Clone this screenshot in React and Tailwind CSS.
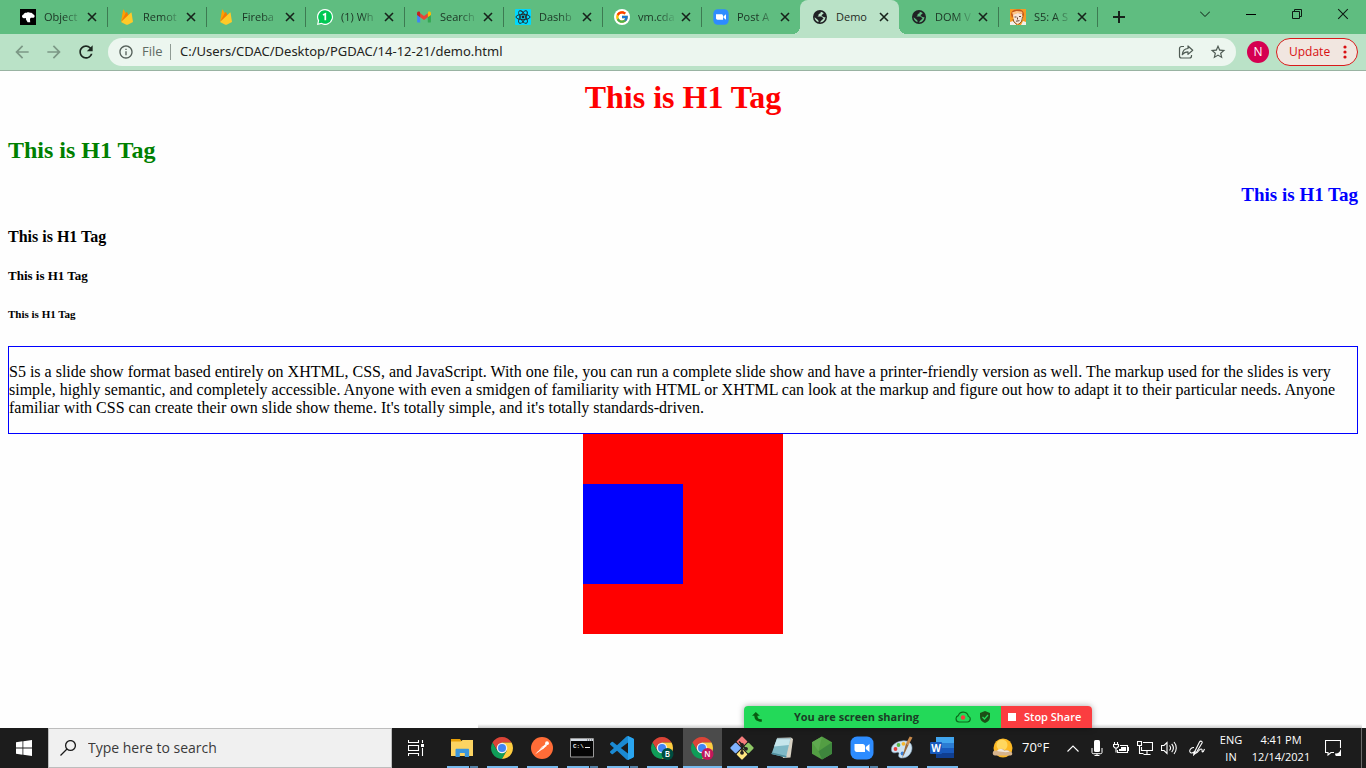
import React from "react";
import { FcGoogle } from "react-icons/fc";
import { MdArrowBack, MdArrowForward, MdRefresh, MdInfoOutline, MdStarBorder } from "react-icons/md";

const SEGOE = "font-['Open_Sans','Noto_Sans',sans-serif]";

/* ---------- favicons ---------- */

const ObjectIcon = () => (
  <svg viewBox="0 0 16 16" className="size-4">
    <path d="M0 0h16v16H0z" fill="#000" />
    <path d="M2 7.500c0-1.300.900-1.800 1.500-2C3.900 4 5.500 3.400 6.700 3.700c1-.700 2.700-.600 3.400 0 1.500-.100 2.600.600 2.900 1.500 1 .300 1.600 1 1.600 2s-.900 1.600-1.800 1.600H11c-.700.500-1 .900-1 1.800l.200 2.700H7.600L6 10.500l-.200-1.400C4.500 9.400 2 9.300 2 7.500z" fill="#fff" />
  </svg>
);

const FirebaseIcon = () => (
  <svg viewBox="0 0 16 16" className="size-4">
    <path d="M2 13 4.100.800c.100-.500.500-.500.700-.100L7 4.700z" fill="#ffa000" />
    <path d="M2 13 7.300 3.200c.200-.400.500-.400.700 0L10 7z" fill="#f57c00" />
    <path d="m2 13 9.800-9.300c.300-.300.700-.200.800.200L14 13l-5.300 2.700c-.500.200-.900.200-1.400 0z" fill="#ffca28" />
  </svg>
);

const WhatsAppIcon = () => (
  <svg viewBox="0 0 16 16" className="size-4">
    <path d="M8 0a8 8 0 1 1-3.700 15.100L0 16l.900-4.300A8 8 0 0 1 8 0z" fill="#fff" />
    <path d="M8 1.200a6.800 6.800 0 1 1-3.500 12.600l-3 .700.700-3A6.800 6.800 0 0 1 8 1.200z" fill="#00c853" />
    <path d="M6 6 8.300 4.800v6.500" fill="none" stroke="#fff" strokeWidth="1.700" />
  </svg>
);

const GmailIcon = () => (
  <svg viewBox="0 0 16 16" className="size-4">
    <path d="M1.100 3.300v9.600c0 .400.300.700.700.700h2.400V7.500z" fill="#4285f4" />
    <path d="M14.900 3.300v9.600c0 .400-.300.700-.700.700h-2.400V7.500z" fill="#34a853" />
    <path d="M11.800 4.300v4l3.200-2.400V4.200c0-1.500-1.700-2.200-2.800-1.400z" fill="#fbbc04" />
    <path d="M4.200 8.300v-4L8 7.100l3.800-2.800v4L8 11.100z" fill="#ea4335" />
    <path d="M1 4.200v1.700l3.200 2.400v-4l-.400-1.500C2.700 2 1 2.700 1 4.200z" fill="#c5221f" />
  </svg>
);

const ReactIcon = () => (
  <svg viewBox="0 0 16 16" className="size-4">
    <rect width="16" height="16" rx="1" fill="#00d8ff" />
    <g fill="none" stroke="#222" strokeWidth="0.900">
      <ellipse cx="8" cy="8" rx="7" ry="2.700" />
      <ellipse cx="8" cy="8" rx="7" ry="2.700" transform="rotate(60 8 8)" />
      <ellipse cx="8" cy="8" rx="7" ry="2.700" transform="rotate(120 8 8)" />
    </g>
    <circle cx="8" cy="8" r="1.400" fill="#222" />
  </svg>
);

const GoogleIcon = () => (
  <span className="flex size-4 items-center justify-center rounded-full bg-white">
    <FcGoogle className="size-[14px]" />
  </span>
);

const ZoomIcon = ({ className = "size-4" }) => (
  <svg viewBox="0 0 24 24" className={className}>
    <rect x="0.500" y="0.500" width="23" height="23" rx="6.500" fill="#2d8cff" />
    <path d="M4.500 8h8.300c1.200 0 2.200 1 2.200 2.200V16H6.700c-1.200 0-2.200-1-2.200-2.200zM15.800 10.900 19.500 8v8l-3.700-2.900z" fill="#fff" />
  </svg>
);

const GlobeIcon = () => (
  <svg viewBox="0 0 16 16" className="size-4" fillRule="evenodd">
    <path
      fill="#202124"
      d="M8 1a7 7 0 1 1 0 14A7 7 0 0 1 8 1zM8.800 2.700C8.500 3.500 8.900 4 8 4.400 7 4.700 6.400 5 6.600 6c.300.800-.800.900-1 1.500h3.600c1 0 1 1 1.700 1.300.900.200.500 1.400-.300 1.700-.900.300-1 1-1.600 1.500-.600.500-.800 1-.9 1.400 3.200-.100 5.300-2.600 5.300-5.400-1.200.500-1.900-.500-2.800-.600C9.700 7.200 9.300 6.500 10 5.700c.700-.500 1.800-.700 1.500-1.600-.8-.8-1.700-1.200-2.700-1.400zM2.600 8.200c.100 2.400 1.800 4.300 3.900 4.900.200-.900-.100-1.500-.6-2C5 10.200 4 9 2.600 8.200z"
    />
  </svg>
);

const PortraitIcon = () => (
  <svg viewBox="0 0 16 16" className="size-4">
    <path d="M0 0h16v16H0z" fill="#f59a23" />
    <path d="M1 5C2 1 5 .500 8 .500c4 0 6 2 6 5.500l-1 3-1-4-8 1-2 3z" fill="#c4571c" />
    <path d="M3 5.500 7 4l5 .500.500 5.500-2.500 4-3 1-3-2.500z" fill="#f8e6da" />
    <path d="M2 3.500 6.500 2l5 .500 1.500 2-5-.500-5 2z" fill="#ffc68a" />
    <path d="M4.500 8h2M9 7.500h2M7.500 8.500v2M6 12.200l3.500-.500" stroke="#503024" strokeWidth="0.900" fill="none" />
    <path d="M0 16v-3l3-1 3.500 4zM11 16l2-4 3 1v3z" fill="#f4f0ea" />
    <path d="m3 10 1 3 3 2.500M12.500 8l-1 4.500-3 3" stroke="#5d3b25" strokeWidth="0.700" fill="none" />
  </svg>
);

/* ---------- browser chrome ---------- */

const tabs = [
  { title: "Object", Icon: ObjectIcon },
  { title: "Remot", Icon: FirebaseIcon },
  { title: "Fireba", Icon: FirebaseIcon },
  { title: "(1) Wh", Icon: WhatsAppIcon },
  { title: "Search", Icon: GmailIcon },
  { title: "Dashb", Icon: ReactIcon },
  { title: "vm.cda", Icon: GoogleIcon },
  { title: "Post A", Icon: ZoomIcon },
  { title: "Demo", Icon: GlobeIcon, active: true },
  { title: "DOM V", Icon: GlobeIcon },
  { title: "S5: A S", Icon: PortraitIcon },
];

const Cross = ({ className, width = 1.6 }) => (
  <svg viewBox="0 0 10 10" className={className} fill="none" stroke="currentColor" strokeWidth={width}>
    <path d="m1 1 8 8M9 1 1 9" />
  </svg>
);

function Tab({ title, Icon, active, divided }) {
  return (
    <div
      className={
        "relative flex h-[34px] w-[99px] shrink-0 items-center pl-3 " +
        (active ? "rounded-t-lg bg-[#bae2c7]" : "")
      }
    >
      {active && (
        <>
          <span className="absolute bottom-0 -left-2 size-2 bg-[radial-gradient(circle_at_0_0,transparent_8px,#bae2c7_8px)]" />
          <span className="absolute bottom-0 -right-2 size-2 bg-[radial-gradient(circle_at_100%_0,transparent_8px,#bae2c7_8px)]" />
        </>
      )}
      <button className="flex items-center gap-2" aria-label={title}>
        <Icon />
        <span
          className={
            "w-9 text-left text-[11px] whitespace-nowrap " +
            (active
              ? "text-[#1f2a23]"
              : "text-[#1b3323] [mask-image:linear-gradient(to_right,#000_55%,rgba(0,0,0,0.15))]")
          }
        >
          {title}
        </span>
      </button>
      <button className="ml-1 flex size-4 items-center justify-center text-[#17231b]" aria-label={"Close " + title}>
        <Cross className="size-[10px]" />
      </button>
      {divided && <span className="absolute top-[7px] -right-px h-5 w-px bg-[#3d7a52]" />}
    </div>
  );
}

function TabStrip() {
  return (
    <div className="flex h-[34px] bg-[#5fbd80] pl-2">
      {tabs.map((t, i) => (
        <Tab key={i} {...t} divided={!t.active && !(tabs[i + 1] && tabs[i + 1].active)} />
      ))}
      <button className="ml-2 flex w-7 items-center justify-center text-[#17231b]" aria-label="New tab">
        <svg viewBox="0 0 12 12" className="size-3" stroke="currentColor" strokeWidth="2">
          <path d="M6 0v12M0 6h12" />
        </svg>
      </button>
      <div className="ml-auto flex h-7 text-[#0d1a12]">
        <button className="flex w-[46px] items-center justify-center" aria-label="Search tabs">
          <svg viewBox="0 0 10 6" className="h-[6px] w-[10px]" fill="none" stroke="currentColor">
            <path d="m0 .500 5 5 5-5" />
          </svg>
        </button>
        <button className="flex w-[46px] items-center justify-center" aria-label="Minimize">
          <span className="h-px w-[10px] bg-black" />
        </button>
        <button className="flex w-[46px] items-center justify-center" aria-label="Restore">
          <svg viewBox="0 0 10 10" className="size-[10px]" fill="none" stroke="currentColor">
            <path d="M.500 2.500h7v7h-7zM2.500 2.500v-2h7v7h-2" />
          </svg>
        </button>
        <button className="flex w-[46px] items-center justify-center" aria-label="Close">
          <Cross className="size-3" width={0.9} />
        </button>
      </div>
    </div>
  );
}

function Toolbar() {
  return (
    <div className="flex h-[37px] items-center border-b border-[#99b3a2] bg-[#bae2c7] pr-2 pl-[6px]">
      <button className="flex w-8 justify-center text-[#7c9886]" aria-label="Back">
        <MdArrowBack className="size-5" />
      </button>
      <button className="flex w-8 justify-center text-[#7c9886]" aria-label="Forward">
        <MdArrowForward className="size-5" />
      </button>
      <button className="flex w-8 justify-center text-[#1c2720]" aria-label="Reload">
        <MdRefresh className="size-5" />
      </button>
      <div className="ml-[6px] flex h-7 min-w-0 flex-1 items-center rounded-full bg-[#ecf6ef] pr-[10px] pl-[10px]">
        <MdInfoOutline className="size-4 text-[#55605a]" />
        <span className="ml-2 w-[28px] text-[13px] text-[#5f6b64]">File</span>
        <span className="h-4 w-px bg-[#8f9b94]" />
        <input
          aria-label="Address"
          className="ml-[9px] min-w-0 flex-1 bg-transparent font-['Noto_Sans',sans-serif] text-[13px] text-[#1f2421] outline-none"
          defaultValue="C:/Users/CDAC/Desktop/PGDAC/14-12-21/demo.html"
        />
        <button aria-label="Share" className="mr-4 text-[#4f5b54]">
          <svg viewBox="0 0 16 16" className="size-4" fill="none" stroke="currentColor" strokeWidth="1.200">
            <path d="M6 2.500H3.500a2 2 0 0 0-2 2v7.500a2 2 0 0 0 2 2h8a2 2 0 0 0 2-2V11" />
            <path d="M10 2v2.500C6.300 4.700 4.600 7 4.300 10.700 5.700 8.700 7.300 7.900 10 7.900v2.500l4.700-4.200z" strokeLinejoin="round" />
          </svg>
        </button>
        <button aria-label="Bookmark" className="text-[#4f5b54]">
          <MdStarBorder className="size-4 scale-110" />
        </button>
      </div>
      <button className="ml-[11px] flex size-[22px] items-center justify-center rounded-full bg-[#d50051] text-xs text-white">
        N
      </button>
      <button className="ml-[7px] flex h-7 w-[82px] items-center justify-between rounded-full border border-[#d91a1a] bg-[#f1e6e0] pr-[10px] pl-3 text-xs text-[#d80f12]">
        Update
        <svg viewBox="0 0 4 14" className="h-[14px] w-1" fill="currentColor">
          <circle cx="2" cy="2" r="1.600" />
          <circle cx="2" cy="7" r="1.600" />
          <circle cx="2" cy="12" r="1.600" />
        </svg>
      </button>
    </div>
  );
}

/* ---------- page ---------- */

function SharingBar() {
  return (
    <div className={"absolute bottom-0 left-[744px] flex h-[22px] w-[348px] overflow-hidden rounded-t shadow-[0_0_6px_rgba(0,0,0,0.35)] " + SEGOE}>
      <div className="flex flex-1 items-center bg-[#23d959] pr-[10px] pl-2 text-[#0a4a12]">
        <svg viewBox="0 0 10 10" className="size-[10px]" fill="#075c10">
          <path d="M3.800 0 0 3.800h2.300C2.400 7.600 4.500 9.800 9.800 9.800V7.300C6.700 7.600 5.500 6.400 5.400 3.800h2.400z" />
        </svg>
        <span className="flex-1 pr-1 text-center text-[11px] font-bold text-[#1b3d26]">You are screen sharing</span>
        <svg viewBox="0 0 16 12" className="mr-2 h-3 w-4">
          <path d="M4 11h8.500a3 3 0 0 0 .800-5.800A5.200 5.200 0 0 0 3.300 4.600 3.300 3.300 0 0 0 4 11z" fill="none" stroke="#0b6b1b" strokeWidth="1.200" />
          <circle cx="8" cy="6.500" r="2.200" fill="#f93b3d" />
        </svg>
        <svg viewBox="0 0 12 12" className="size-3">
          <path d="M6 0 11 2v4c0 3-2 5-5 6-3-1-5-3-5-6V2z" fill="#1c4f16" />
          <path d="m3.500 6 2 2 3.500-4" fill="none" stroke="#23d959" strokeWidth="1.300" />
        </svg>
      </div>
      <button className="flex w-[91px] items-center gap-2 bg-[#fb3d40] pl-[7px] text-[11px] font-semibold whitespace-nowrap text-white">
        <span className="size-2 bg-white" />
        Stop Share
      </button>
    </div>
  );
}

function Page() {
  return (
    <main className="relative flex-1 bg-[#fefefe] p-2 font-['Liberation_Serif',serif] text-black">
      <h1 className="text-center text-[32px] leading-9 font-bold text-[#ff0000]">This is H1 Tag</h1>
      <h2 className="mt-[22px] text-2xl leading-[27px] font-bold text-[#008000]">This is H1 Tag</h2>
      <h3 className="mt-5 text-right text-[19px] leading-[22px] font-bold text-[#0000ff]">This is H1 Tag</h3>
      <h4 className="mt-[22px] text-base leading-[18px] font-bold">This is H1 Tag</h4>
      <h5 className="mt-[22px] text-[13px] leading-[15px] font-bold">This is H1 Tag</h5>
      <h6 className="mt-[25px] text-[11px] leading-[13px] font-bold">This is H1 Tag</h6>
      <div className="mt-[25px] border border-[#0000ff] py-4">
        <p className="text-base leading-[18px]">
          S5 is a slide show format based entirely on XHTML, CSS, and JavaScript. With one file, you can run a
          complete slide show and have a printer-friendly version as well. The markup used for the slides is very
          simple, highly semantic, and completely accessible. Anyone with even a smidgen of familiarity with HTML or
          XHTML can look at the markup and figure out how to adapt it to their particular needs. Anyone familiar with
          CSS can create their own slide show theme. It's totally simple, and it's totally standards-driven.
        </p>
      </div>
      <div className="mx-auto flex size-[200px] items-center bg-[#ff0000]">
        <div className="size-[100px] bg-[#0000ff]" />
      </div>
      <div className="absolute right-1 bottom-0 left-[478px] h-1 bg-linear-to-b from-transparent to-black/20" />
      <SharingBar />
    </main>
  );
}

/* ---------- taskbar icons ---------- */

const FolderIcon = () => (
  <svg viewBox="0 0 24 24" className="size-6">
    <path d="M1 3h9l1.500 2H23v15H1z" fill="#e8a008" />
    <path d="M1 5.500h10L12.500 4H23v16H1z" fill="#fcd462" />
    <path d="M5.500 21v-7c0-.800.500-1.300 1.300-1.300h11c.800 0 1.300.500 1.300 1.300v7h-4.300v-4H9.800v4z" fill="#3a96dd" />
  </svg>
);

const ChromeIcon = ({ badge, color }) => (
  <svg viewBox="0 0 48 48" className="size-6">
    <path d="M4.950 13A22 22 0 0 1 43.050 13H24v11l-9.530 5.500z" fill="#db4437" />
    <path d="m4.950 13 9.520 16.500L24 24l9.530 5.500L24 46A22 22 0 0 1 4.950 13z" fill="#0f9d58" />
    <path d="M43.050 13H24v11l9.530 5.500L24 46a22 22 0 0 0 19.050-33z" fill="#ffcd40" />
    <circle cx="24" cy="24" r="10.500" fill="#f1f1f1" />
    <circle cx="24" cy="24" r="8" fill="#4285f4" />
    {badge && (
      <>
        <circle cx="35" cy="36" r="12" fill={color} />
        <text x="35" y="42" textAnchor="middle" fontSize="16" fontWeight="600" fill="#fff">
          {badge}
        </text>
      </>
    )}
  </svg>
);

const PostmanIcon = () => (
  <svg viewBox="0 0 24 24" className="size-6">
    <circle cx="12" cy="12" r="11" fill="#ff6c37" />
    <path d="M5 18.500 12.500 10l2 1.800z" fill="#fff" />
    <path d="m10 13 5.500-5 1.500 1.700-4.500 3.600z" fill="#fff" />
    <circle cx="17" cy="7.200" r="1.900" fill="#fff" />
    <path d="m8 15 5-4.500" stroke="#ff6c37" strokeWidth="0.600" />
  </svg>
);

const CmdIcon = () => (
  <svg viewBox="0 0 24 24" className="size-6">
    <path d="M.500 2.500h23v18.500H.500z" fill="#050505" stroke="#9a9a9a" />
    <path d="M1 3h22v2H1z" fill="#d5dce4" />
    <path d="M17 4h1M19 4h1M21 4h1" stroke="#555" />
    <text x="3" y="12" fontSize="6" fontWeight="bold" fill="#eee" className="font-['Liberation_Mono',monospace]">
      C:\
    </text>
    <path d="M15 11.500h5" stroke="#eee" />
  </svg>
);

const CodeIcon = () => (
  <svg viewBox="0 0 24 24" className="size-6">
    <path
      fill="#1b8ad3"
      d="M23.150 2.587L18.210.210a1.494 1.494 0 0 0-1.705.290l-9.460 8.630-4.120-3.128a.999.999 0 0 0-1.276.057L.327 7.261A1 1 0 0 0 .326 8.740L3.899 12 .326 15.260a1 1 0 0 0 .001 1.479L1.650 17.940a.999.999 0 0 0 1.276.057l4.120-3.128 9.460 8.630a1.492 1.492 0 0 0 1.704.290l4.942-2.377A1.500 1.500 0 0 0 24 20.060V3.939a1.500 1.500 0 0 0-.850-1.352zm-5.146 14.861L10.826 12l7.178-5.448v10.896z"
    />
    <path d="m18 0 5.200 2.600c.500.300.800.800.800 1.400v16c0 .600-.300 1.100-.800 1.400L18 24z" fill="#2aa5f0" />
  </svg>
);

const GitIcon = () => (
  <svg viewBox="0 0 24 24" className="size-6">
    <g transform="rotate(45 12 12)">
      <rect x="3.500" y="3.500" width="8" height="8" rx="1" fill="#f47c7c" />
      <rect x="12.500" y="3.500" width="8" height="8" rx="1" fill="#8fc866" />
      <rect x="3.500" y="12.500" width="8" height="8" rx="1" fill="#80b3ff" />
      <rect x="12.500" y="12.500" width="8" height="8" rx="1" fill="#ffe680" />
    </g>
    <path d="M9 5.500 12 8.500v9M12 9l4 4" stroke="#231f20" strokeWidth="1.600" fill="none" />
    <circle cx="12" cy="8.800" r="1.900" fill="#231f20" />
    <circle cx="12" cy="16.800" r="1.900" fill="#231f20" />
    <circle cx="16" cy="12.800" r="1.900" fill="#231f20" />
  </svg>
);

const NotepadIcon = () => (
  <svg viewBox="0 0 24 24" className="size-6">
    <path d="m7 2 14-.500 2 1.500-2.500 18.500-7.500.500z" fill="#d8d2c4" />
    <path d="M7 2.500 20.500 2 16 21.500 1.500 18z" fill="#7fb9c6" />
    <path d="M7 2.500 20.500 2l-1.600 7L4 10.500z" fill="#c6e6ec" />
    <path d="M7.500 2.500h13" stroke="#8b9aa0" strokeDasharray="1 1" strokeWidth="1.500" />
    <path d="m16 21.500-14.500-3.500.500-1.500 14.500 3.500z" fill="#4f8d9c" />
  </svg>
);

const NodeIcon = () => (
  <svg viewBox="0 0 24 24" className="size-6">
    <path d="m12 .500 10 5.700v11.600l-10 5.700-10-5.700V6.200z" fill="#539e43" />
    <path d="M12 .500 2 6.200l6.500 9z" fill="#5fa84f" />
    <path d="m22 6.200-13.500 9 3.500 8.300 10-5.700z" fill="#3e863d" />
  </svg>
);

const PaintIcon = () => (
  <svg viewBox="0 0 24 24" className="size-6">
    <path d="M12 5c6-1 10 2 10 7s-4 10-10 10c-3 0-4-2-3-4 .500-1.200-1-2-2.500-1.500C3 17.500 1 16 1.500 12.500 2 8.500 7 5.500 12 5z" fill="#cfe3f2" stroke="#8aa9c2" strokeWidth="0.600" />
    <circle cx="5.500" cy="13" r="1.900" fill="#e2403a" />
    <circle cx="8.500" cy="9" r="1.900" fill="#58b947" />
    <circle cx="13.500" cy="7.800" r="1.900" fill="#f6b62c" />
    <circle cx="12.500" cy="17.500" r="1.900" fill="#3b7fd4" />
    <path d="m22.500 1.500-2.800-1-3.700 7 2.500 1.500z" fill="#c98a4b" />
    <path d="m16 7.500 2.500 1.500-3 6.500-3.500 7z" fill="#9b6a3c" />
  </svg>
);

const WordIcon = () => (
  <svg viewBox="0 0 24 24" className="size-6">
    <path d="M6 1h18v6H6z" fill="#41a5ee" />
    <path d="M6 7h18v5H6z" fill="#2b7cd3" />
    <path d="M6 12h18v5H6z" fill="#185abd" />
    <path d="M6 17h18v5H6z" fill="#103f91" />
    <rect y="6" width="12" height="12" rx="1" fill="#185abd" />
    <text x="6" y="15.500" textAnchor="middle" fontSize="10" fontWeight="bold" fill="#fff">
      W
    </text>
  </svg>
);

const TaskZoomIcon = () => <ZoomIcon className="size-6" />;
const ChromeB = () => <ChromeIcon badge="B" color="#004d40" />;
const ChromeN = () => <ChromeIcon badge="N" color="#c2185b" />;

const apps = [
  { name: "File Explorer", Icon: FolderIcon, stacked: true },
  { name: "Chrome", Icon: ChromeIcon },
  { name: "Postman", Icon: PostmanIcon },
  { name: "Command Prompt", Icon: CmdIcon, stacked: true },
  { name: "Visual Studio Code", Icon: CodeIcon, stacked: true },
  { name: "Chrome profile B", Icon: ChromeB },
  { name: "Chrome profile N", Icon: ChromeN, active: true },
  { name: "Git", Icon: GitIcon },
  { name: "Notepad", Icon: NotepadIcon },
  { name: "Node", Icon: NodeIcon },
  { name: "Zoom", Icon: TaskZoomIcon, stacked: true },
  { name: "Paint", Icon: PaintIcon },
  { name: "Word", Icon: WordIcon },
];

function AppButton({ name, Icon, stacked, active }) {
  return (
    <button
      aria-label={name}
      className={"flex h-10 w-[39px] shrink-0 flex-col items-center " + (active ? "bg-[#4b4b4b]" : "")}
    >
      <span className="flex h-[38px] items-center pt-[2px] pr-px">
        <Icon />
      </span>
      <span className={"flex h-[2px] bg-[#76b9ed] " + (active ? "w-full" : "w-[31px]")}>
        {stacked && <span className="ml-auto w-[9px] border-l border-[#1d1d1d] bg-[#5583a8]" />}
      </span>
    </button>
  );
}

const TrayButton = ({ label, children, className = "w-6" }) => (
  <button aria-label={label} className={"flex h-10 shrink-0 items-center justify-center text-white " + className}>
    {children}
  </button>
);

const line = { fill: "none", stroke: "currentColor", strokeWidth: 1.1 };

function Tray() {
  return (
    <div className="ml-auto flex shrink-0 items-center">
      <button className="flex h-10 w-[69px] items-center gap-2 text-[13px] text-white">
        <svg viewBox="0 0 22 20" className="h-5 w-[22px] shrink-0">
          <circle cx="11" cy="10" r="9.500" fill="#fdb924" />
          <circle cx="10" cy="7" r="5.500" fill="#ffd75e" />
          <path d="M3 17.500a2.500 2.500 0 0 1 .500-5c1.500 0 2 .300 2.500.500 1-2.500 5-3 7-.500 3-.800 4 0 4.500 1 3-.200 4 3.700 1 4z" fill="#d7b48d" />
          <path d="M5 13c1-2.500 5-3 7.500 0 2-.700 4-.500 5 .700-4 1-7 .300-12.500-.700z" fill="#f0e6da" />
        </svg>
        70°F
      </button>
      <TrayButton label="Show hidden icons">
        <svg viewBox="0 0 12 7" className="h-[7px] w-3" {...line}>
          <path d="m.500 6.500 5.500-5.500 5.500 5.500" />
        </svg>
      </TrayButton>
      <TrayButton label="Microphone">
        <svg viewBox="0 0 12 16" className="h-4 w-3" fill="none" stroke="currentColor">
          <rect x="3" y="0" width="6" height="12" rx="1.500" fill="currentColor" stroke="none" />
          <path d="M1 8v4.500c0 .800.500 1.200 1.200 1.200h7.600c.700 0 1.200-.400 1.200-1.200V8M6 13.500v2M3.500 15.500h5" />
        </svg>
      </TrayButton>
      <TrayButton label="Battery">
        <svg viewBox="0 0 16 12" className="h-3 w-4" {...line}>
          <path d="M7 3.500h7.500v7H4.500V8M14.500 5.500h1v3h-1" />
          <path d="M8 5h5v4H6V7h2z" fill="currentColor" stroke="none" />
          <path d="M1.500 0v2M4.500 0v2M.500 2.500h5v2l-1.500 1.500H2L.500 4.500zM3 6v4.500" />
        </svg>
      </TrayButton>
      <TrayButton label="Network">
        <svg viewBox="0 0 16 14" className="h-[14px] w-4" {...line}>
          <path d="M6 1.500h9.500v8H4.500V6M10 9.500v3.500M6.500 13.500h7" />
          <path d="M.500.500h4v4h-4zM2.500 4.500v8h4" />
        </svg>
      </TrayButton>
      <TrayButton label="Volume">
        <svg viewBox="0 0 16 14" className="h-[14px] w-4" {...line}>
          <path d="M.500 4.500H3l3-3v11l-3-3H.500zM8.500 4.500c1.300 1.500 1.300 3.500 0 5M10.700 2.800c2.200 2.700 2.200 5.700 0 8.400M13 1c3 3.500 3 8.500 0 12" />
        </svg>
      </TrayButton>
      <TrayButton label="Windows Ink" className="w-8">
        <svg viewBox="0 0 16 16" className="size-4" {...line}>
          <path d="M5 13 10.500 2c1-1.700 3.300-.700 2.500 1L7.300 12.500zM5 13l-.300 1.800L7.300 12.500" />
          <path d="M5 7.500c-2.500 0-5 2-4 4.500 1 2 4 .500 5.500-1M7 13c2.500-.500 3-4 5-4s.500 3 1.500 3 1.500-1.500 2-3" />
        </svg>
      </TrayButton>
      <TrayButton label="Language" className="w-9 flex-col text-[11px] leading-[17px]">
        <span>ENG</span>
        <span>IN</span>
      </TrayButton>
      <TrayButton label="Clock" className="w-16 flex-col text-[11px] leading-[17px] whitespace-nowrap">
        <span>4:41 PM</span>
        <span>12/14/2021</span>
      </TrayButton>
      <TrayButton label="Notifications" className="mr-2 w-10">
        <svg viewBox="0 0 16 16" className="size-4" {...line}>
          <path d="M9 12.500H6l-3 2.500v-2.500H.500V.500h15V8" />
          <path d="M15.500 9.500a4 4 0 1 1-5.500 4c2.500.500 5-1 5.500-4z" fill="currentColor" stroke="none" />
        </svg>
      </TrayButton>
      <button aria-label="Show desktop" className="h-10 w-[5px] border-l border-[#6b6b6b]" />
    </div>
  );
}

function Taskbar() {
  return (
    <footer className="flex h-10 bg-[#1c1c1c]">
      <button aria-label="Start" className="flex w-12 shrink-0 items-center justify-center">
        <svg viewBox="0 0 16 16" className="size-4" fill="#fff">
          <path d="M0 2.200 6.500 1.300v6.200H0zM7.300 1.200 16 0v7.500H7.300zM0 8.400h6.500v6.300L0 13.800zM7.300 8.400H16V16l-8.700-1.200z" />
        </svg>
      </button>
      <label className="flex w-[344px] items-center border border-[#bdbdbd] bg-[#f0f0f0] pl-[11px]">
        <svg viewBox="0 0 16 16" className="size-4 shrink-0" fill="none" stroke="#1a1a1a" strokeWidth="1.300">
          <circle cx="10.500" cy="5.500" r="4.900" />
          <path d="M7 9 .500 15.500" />
        </svg>
        <input
          aria-label="Type here to search"
          placeholder="Type here to search"
          className="ml-3 min-w-0 flex-1 bg-transparent text-sm text-[#333] outline-none placeholder:text-[#3a3a3a]"
        />
      </label>
      <button aria-label="Task view" className="flex w-12 shrink-0 items-center justify-center text-white">
        <svg viewBox="0 0 16 16" className="size-4" {...line}>
          <path d="M.500 0v2.500h10V0M.500 5.500h10v5H.500zM.500 16v-2.500h10V16M14.500 0v3M14.500 8v8" />
          <path d="M13 4h3v3h-3z" fill="currentColor" stroke="none" />
        </svg>
      </button>
      <nav className="ml-[3px] flex gap-px">
        {apps.map((a) => (
          <AppButton key={a.name} {...a} />
        ))}
      </nav>
      <Tray />
    </footer>
  );
}

export default function App() {
  return (
    <div className={"flex min-h-screen flex-col " + SEGOE}>
      <header>
        <TabStrip />
        <Toolbar />
      </header>
      <Page />
      <Taskbar />
    </div>
  );
}
